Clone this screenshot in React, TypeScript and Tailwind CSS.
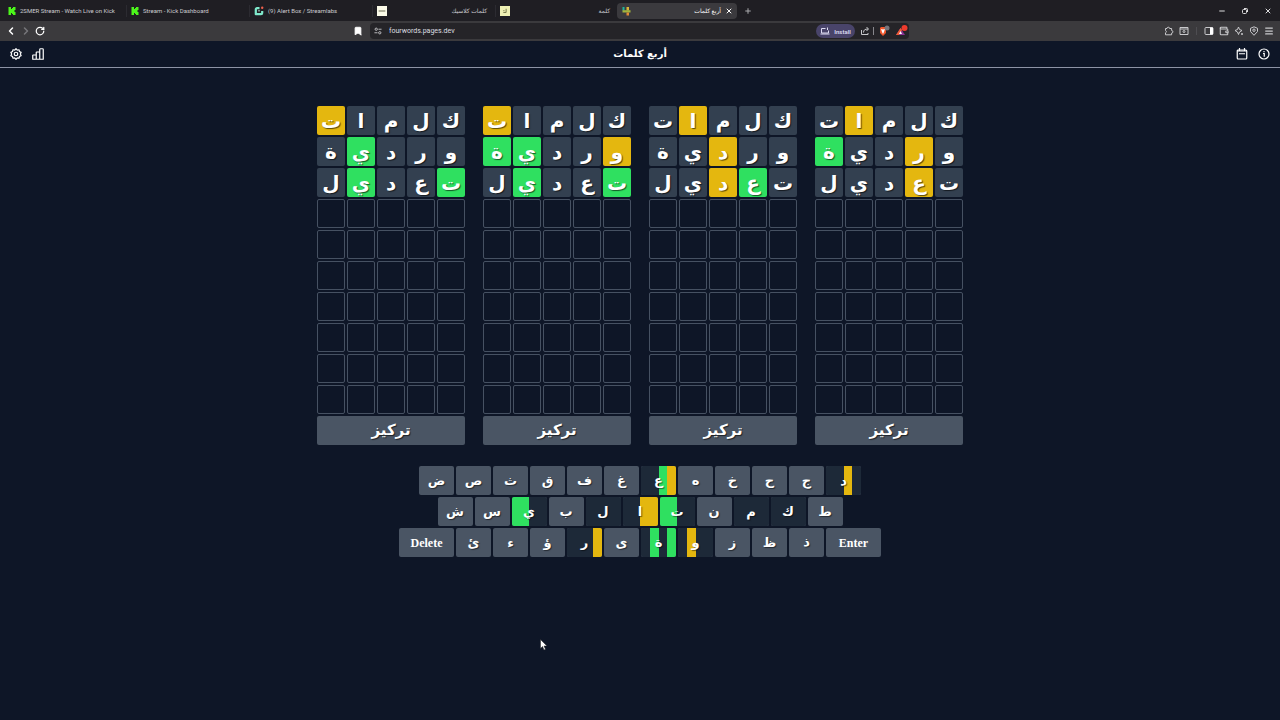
import React from 'react';
import { ChevronLeft, ChevronRight, RotateCw, Bookmark, Wallet, Menu, Plus, X, Minus } from 'lucide-react';

type Mark = '.' | 'y' | 'g';

const ROWS = 10;
const WORDS = ['كلمات', 'وردية', 'تعديل'];

// one string per guess, in reading order of the word
const BOARDS = [
  ['...y.', '.y..g', '.y...'],
  ['...y.', '..y..', '.gy..'],
  ['....y', 'y..gg', 'g..g.'],
  ['....y', '...g.', 'g..g.'],
];

const KEY_ROWS = [
  ['ض', 'ص', 'ث', 'ق', 'ف', 'غ', 'ع', 'ه', 'خ', 'ح', 'ج', 'د'],
  ['ش', 'س', 'ي', 'ب', 'ل', 'ا', 'ت', 'ن', 'م', 'ك', 'ط'],
  ['Delete', 'ئ', 'ء', 'ؤ', 'ر', 'ى', 'ة', 'و', 'ز', 'ظ', 'ذ', 'Enter'],
];

// a used key is split in four, one part for each board
const USED_KEYS: Record<string, string> = {
  ع: '..gy',
  د: '..y.',
  ي: 'gg..',
  ل: '....',
  ا: '..yy',
  ت: 'gg..',
  م: '....',
  ك: '....',
  ر: '...y',
  ة: '.g.g',
  و: '.y..',
};

const TILE_COLORS: Record<Mark, string> = {
  '.': 'bg-[#334050]',
  y: 'bg-[#e4b70f]',
  g: 'bg-[#2fe060]',
};

const PART_COLORS: Record<Mark, string> = {
  '.': 'bg-[#1d2938]',
  y: 'bg-[#e4b70f]',
  g: 'bg-[#2fe060]',
};

function KickIcon() {
  return (
    <svg viewBox="0 0 8 8" className="size-2 shrink-0">
      <path fill="#4cf51b" d="M0.500 0h2.500v2h1V1h1V0h2.500v3H7v.5H6v1h1V5h.5v3H5V7H4V6H3v2H.5z" />
    </svg>
  );
}

function StreamlabsIcon() {
  return (
    <svg viewBox="0 0 10 10" className="size-2.5 shrink-0">
      <path fill="none" stroke="#7fe9cb" strokeWidth="2.200" strokeLinejoin="round" d="M5.500 2.200H3A1.200 1.200 0 0 0 1.800 3.400V8.200H7A1.200 1.200 0 0 0 8.200 7V5" />
      <path fill="#d8fff2" d="M4.500 4h1v1.500h-1z" />
      <circle cx="8.200" cy="1.800" r="1.200" fill="#f0604d" />
    </svg>
  );
}

function ClassicIcon() {
  return (
    <svg viewBox="0 0 9 9" className="size-2.5 shrink-0">
      <path fill="#fbfbe9" d="M0 0h9v9H0z" />
      <path stroke="#777a60" d="M1.500 4.500h6" />
    </svg>
  );
}

function WordIcon() {
  return (
    <svg viewBox="0 0 9 9" className="size-2.5 shrink-0">
      <path fill="#eef0b4" d="M0 0h9v9H0z" />
      <path fill="none" stroke="#76794a" strokeWidth=".9" d="M3 5.800h2.500V2.500M3 4.200h1" />
    </svg>
  );
}

function FourIcon() {
  return (
    <svg viewBox="0 0 10 10" className="size-2.5 shrink-0">
      <path fill="#20b69a" d="M1.500 1h2v3.500h-2z" />
      <path fill="#d8b73a" d="M5.500 1h2.500v3.500H5.500z" />
      <path fill="#a3b43d" d="M1.500 4.200h8v2.300h-8z" />
      <path fill="#e48a35" d="M5.500 6.500H8V9.500H5.500z" />
    </svg>
  );
}

interface TabProps {
  icon: React.ReactNode;
  title: string;
  rtl?: boolean;
}

function Tab({ icon, title, rtl }: TabProps) {
  return (
    <button type="button" className="flex h-3 w-[123px] shrink-0 items-center gap-1 border-r border-[#2c2b31] pr-2 pl-1 text-[6px] text-[#cbcbcf]">
      {icon}
      <span dir={rtl ? 'rtl' : 'ltr'} className="grow text-start whitespace-nowrap">{title}</span>
    </button>
  );
}

function BrowserChrome() {
  return (
    <div className="font-[Roboto,'DejaVu_Sans',sans-serif]">
      <div className="flex h-[21px] items-center bg-[#1f1e23] pl-1">
        <Tab icon={<KickIcon />} title="2SMER Stream - Watch Live on Kick" />
        <Tab icon={<KickIcon />} title="Stream - Kick Dashboard" />
        <Tab icon={<StreamlabsIcon />} title="(9) Alert Box / Streamlabs" />
        <Tab icon={<ClassicIcon />} title="كلمات كلاسيك" rtl />
        <Tab icon={<WordIcon />} title="كلمة" rtl />
        <div className="-ml-0.5 flex h-4 w-[120px] shrink-0 items-center gap-1 rounded bg-[#3b3a3e] px-1 text-[6px] text-white">
          <FourIcon />
          <button type="button" dir="rtl" className="grow text-start">أربع كلمات</button>
          <button type="button" aria-label="Close tab"><X className="size-2" strokeWidth={3} /></button>
        </div>
        <button type="button" aria-label="New tab" className="ml-[7px] text-[#aaaaae]"><Plus className="size-2" strokeWidth={3} /></button>
        <div className="ml-auto flex items-center gap-[15px] pr-2 text-[#dddddf]">
          <button type="button" aria-label="Minimize"><Minus className="size-2" strokeWidth={3} /></button>
          <button type="button" aria-label="Restore">
            <svg viewBox="0 0 8 8" className="size-2" fill="none" stroke="currentColor" strokeWidth="1">
              <rect x="1.500" y="2.500" width="4" height="4" rx="1" />
              <path d="M3 1.500h2.500a1 1 0 0 1 1 1V5" />
            </svg>
          </button>
          <button type="button" aria-label="Close"><X className="size-2" strokeWidth={3} /></button>
        </div>
      </div>

      <div className="flex h-5 items-center bg-[#3b3a3d] text-[#c9c9cc]">
        <div className="flex w-[353px] items-center gap-[3px] pl-[5px]">
          <button type="button" aria-label="Back" className="text-white"><ChevronLeft className="size-3" strokeWidth={3} /></button>
          <button type="button" aria-label="Forward" className="text-[#77767a]"><ChevronRight className="size-3" strokeWidth={3} /></button>
          <button type="button" aria-label="Reload" className="text-white"><RotateCw className="size-2.5" strokeWidth={3} /></button>
        </div>
        <button type="button" aria-label="Bookmark" className="mr-[7px] text-white"><Bookmark className="size-2.5" fill="currentColor" /></button>
        <div className="flex h-4 w-[539px] items-center rounded bg-[#252428] pl-1">
          <svg viewBox="0 0 9 9" className="size-2 shrink-0" fill="none" stroke="currentColor">
            <circle cx="2.500" cy="2.500" r="1.300" />
            <circle cx="6.500" cy="6.500" r="1.300" />
            <path d="M5 2.500h3.500M.5 6.500H4" />
          </svg>
          <input aria-label="Address" defaultValue="fourwords.pages.dev" className="ml-[7px] min-w-0 grow bg-transparent text-[7px] text-[#dedee0] outline-none" />
          <button type="button" className="flex h-3.5 w-[39px] shrink-0 items-center justify-center gap-1 rounded-full bg-[#49446a] text-[6px] font-semibold text-[#dedcf3]">
            <svg viewBox="0 0 10 8" className="h-2 w-2.5" fill="none" stroke="currentColor">
              <path d="M5.500 1.500H1.500v4.500h7V3.500M.5 7h9M7.500 .5v2.500" />
            </svg>
            Install
          </button>
          <button type="button" aria-label="Share" className="ml-[5px]">
            <svg viewBox="0 0 10 10" className="size-2.5" fill="none" stroke="currentColor">
              <path d="M1.500 4v4.500h6.500V7M3.500 6.500c0-2.500 1.500-3.500 4.500-3.500M6.500 1l2 2-2 2" />
            </svg>
          </button>
          <span className="ml-[3px] h-2 w-px bg-[#88878c]" />
          <button type="button" aria-label="Shields" className="ml-1">
            <svg viewBox="0 0 12 12" className="size-3">
              <path fill="#f1562b" d="M2 3l1-1h4l1 1v5l-3 3-3-3z" />
              <path fill="#fff" d="M3 4l2 .5L7 4 6 7 5 9 4 7z" />
              <circle cx="9" cy="3" r="2.500" fill="#77757c" />
            </svg>
          </button>
          <button type="button" aria-label="Rewards" className="mr-px ml-1.5">
            <svg viewBox="0 0 12 12" className="size-3">
              <path fill="#8c3393" d="M4.500 3L9 10H0z" />
              <path fill="#f05b31" d="M4.500 3L0 10h3l3-5z" />
              <path fill="#fff" d="M4.500 6L6 9H3z" />
              <circle cx="8.500" cy="3" r="3" fill="#ee3b2d" />
            </svg>
          </button>
        </div>
        <div className="ml-auto flex items-center gap-[5px] pr-1.5">
          <button type="button" aria-label="Extensions">
            <svg viewBox="0 0 10 10" className="size-2.5" fill="none" stroke="currentColor" strokeLinejoin="round">
              <path d="M1.500 2.500H3a1.300 1.300 0 0 1 2.600 0h2v2a1.300 1.300 0 0 1 0 2.600v1.700H1.500V6.800a1.200 1.200 0 0 0 0-2.300z" />
            </svg>
          </button>
          <button type="button" aria-label="Search tabs">
            <svg viewBox="0 0 10 10" className="size-2.5" fill="none" stroke="currentColor">
              <path d="M1 1.500h8v7H1zM1 3h8" />
              <circle cx="5" cy="5.500" r="1" />
            </svg>
          </button>
          <span className="mx-0.5 h-2 w-px bg-[#4e4d51]" />
          <button type="button" aria-label="Side panel">
            <svg viewBox="0 0 10 10" className="size-2.5">
              <rect x="1" y="1.500" width="8" height="7" rx="1" fill="none" stroke="currentColor" />
              <path fill="#fff" d="M6 1.500h3v7H6z" />
            </svg>
          </button>
          <button type="button" aria-label="Wallet"><Wallet className="size-2.5" strokeWidth={2.5} /></button>
          <button type="button" aria-label="Leo">
            <svg viewBox="0 0 10 10" className="size-2.5" fill="none" stroke="currentColor" strokeLinejoin="round">
              <path d="M4.500 1l1 2.500L8 4.500 5.500 6l-1 2.500-1-2.500L1 4.500l2.500-1z" />
              <path d="M8 7v2M7 8h2" />
            </svg>
          </button>
          <button type="button" aria-label="VPN">
            <svg viewBox="0 0 10 10" className="size-2.5" fill="none" stroke="currentColor">
              <path d="M5 .8l3.500 1.500v3.200L5 9.300 1.500 5.500V2.300z" />
              <circle cx="5" cy="4.200" r="1.200" />
            </svg>
          </button>
          <button type="button" aria-label="Menu"><Menu className="size-2.5" strokeWidth={3} /></button>
        </div>
      </div>
    </div>
  );
}

function GameHeader() {
  return (
    <header className="grid h-[27px] grid-cols-3 items-center border-b border-[#8d93a5] px-2.5 text-white">
      <div className="flex gap-2.5">
        <button type="button" aria-label="Settings">
          <svg viewBox="0 0 24 24" className="size-3" fill="none" stroke="currentColor" strokeWidth="2.400" strokeLinejoin="round">
            <path d="M12 1.500l2.500 2.600 3.700-.6.700 3.600 3.300 1.700L20.600 12l1.600 3.200-3.300 1.700-.7 3.600-3.700-.6L12 22.500l-2.500-2.600-3.700.6-.7-3.600-3.300-1.700L3.400 12 1.800 8.800l3.300-1.700.7-3.600 3.700.6z" />
            <circle cx="12" cy="12" r="3.500" />
          </svg>
        </button>
        <button type="button" aria-label="Statistics">
          <svg viewBox="0 0 24 24" className="size-3" fill="none" stroke="currentColor" strokeWidth="2.400" strokeLinejoin="round">
            <path d="M1.500 22.500V15a1 1 0 0 1 1-1h6v8.500zM8.500 22.500V9a1 1 0 0 1 1-1h6v14.500zM15.500 22.500V3a1.500 1.500 0 0 1 1.500-1.500h4A1.500 1.500 0 0 1 22.500 3v19.500z" />
          </svg>
        </button>
      </div>
      <h1 dir="rtl" className="text-center font-['DejaVu_Sans',sans-serif] text-[10px] leading-none font-bold">أربع كلمات</h1>
      <div className="flex justify-end gap-2.5">
        <button type="button" aria-label="Daily words">
          <svg viewBox="0 0 24 24" className="size-3" fill="none" stroke="currentColor" strokeWidth="2.400">
            <rect x="2.500" y="4" width="19" height="18" rx="2" />
            <path d="M7 0v6M17 0v6M2.500 6h19M6 11.500h12" />
          </svg>
        </button>
        <button type="button" aria-label="How to play">
          <svg viewBox="0 0 24 24" className="size-3" fill="none" stroke="currentColor" strokeWidth="2.400">
            <circle cx="12" cy="12" r="10" />
            <path d="M12 6v2.500M10 11h2.500v6.500" />
          </svg>
        </button>
      </div>
    </header>
  );
}

function Board({ marks }: { marks: string[] }) {
  return (
    <section className="flex flex-col gap-0.5">
      {Array.from({ length: ROWS }, (_, row) => (
        <div key={row} className="flex gap-0.5">
          {Array.from({ length: 5 }, (_, col) =>
            row < WORDS.length ? (
              <div
                key={col}
                className={`flex h-[29px] w-7 items-center justify-center rounded-xs text-[20px] leading-none font-bold text-white text-shadow-[1px_1px_1px_rgb(0_0_0/0.6)] ${TILE_COLORS[marks[row][col] as Mark]}`}
              >
                {WORDS[row][col]}
              </div>
            ) : (
              <div key={col} className="h-[29px] w-7 rounded-xs border border-[#465162]" />
            )
          )}
        </div>
      ))}
      <button type="button" className="h-[29px] rounded-xs bg-[#4a5564] text-[15px] leading-none font-bold text-white text-shadow-[1px_1px_1px_rgb(0_0_0/0.6)]">
        تركيز
      </button>
    </section>
  );
}

function Key({ label }: { label: string }) {
  if (label.length > 1) {
    return (
      <button type="button" className="h-[29px] w-[55px] rounded-xs bg-[#4a5564] font-['Liberation_Serif',serif] text-[12px] font-bold text-white">
        {label}
      </button>
    );
  }

  const parts = USED_KEYS[label];

  return (
    <button type="button" className="relative h-[29px] w-[35px] overflow-hidden rounded-xs bg-[#4a5564] text-[13px] leading-none font-bold text-white">
      {parts && (
        <span className="absolute inset-0 grid grid-cols-4">
          {parts.split('').map((part, i) => (
            <span key={i} className={PART_COLORS[part as Mark]} />
          ))}
        </span>
      )}
      <span className="relative text-shadow-[1px_1px_1px_rgb(0_0_0/0.5)]">{label}</span>
    </button>
  );
}

export default function App() {
  return (
    <div className="relative min-h-screen bg-[#0e1627]">
      <BrowserChrome />
      <GameHeader />

      <main className="flex flex-col items-center gap-[21px] pt-[38px] font-['DejaVu_Sans',sans-serif]">
        <div dir="rtl" className="flex gap-[18px]">
          {BOARDS.map((marks, i) => (
            <Board key={i} marks={marks} />
          ))}
        </div>

        <div className="flex flex-col items-center gap-0.5">
          {KEY_ROWS.map((keys, i) => (
            <div key={i} className="flex gap-0.5">
              {keys.map((label) => (
                <Key key={label} label={label} />
              ))}
            </div>
          ))}
        </div>
      </main>

      {/* mouse pointer */}
      <svg viewBox="0 0 8 12" className="pointer-events-none absolute top-[639px] left-[540px] h-3 w-2">
        <path fill="#fff" stroke="#222" strokeWidth=".5" d="M.5.5v9l2-2 1.500 3.500 1.500-.7L4 7h3z" />
      </svg>
    </div>
  );
}
